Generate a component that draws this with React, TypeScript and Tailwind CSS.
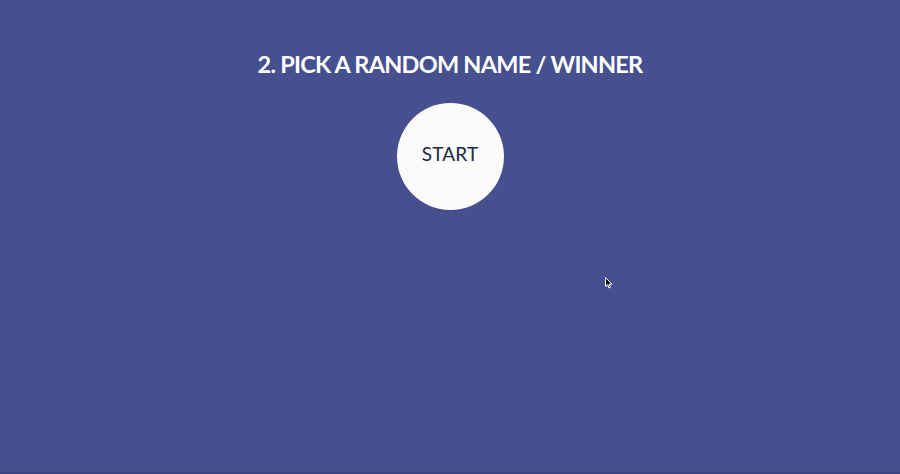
export default function App() {
  return (
    <div className="relative h-[474px] w-full overflow-hidden bg-[#46508f] font-['Lato',sans-serif]">
      <div className="flex flex-col items-center pt-[49px]">
        <h1 className="text-[23.5px] font-bold leading-[30px] tracking-[-0.75px] text-white">
          2. PICK A RANDOM NAME / WINNER
        </h1>

        <button className="mt-[24px] flex h-[107px] w-[107px] items-center justify-center rounded-full bg-[#fbfbfc] pb-[4px] text-[19px] tracking-[0.2px] text-[#1c2a45]">
          START
        </button>
      </div>

      {/* mouse pointer */}
      <svg
        className="absolute left-[605px] top-[277px]"
        width="8"
        height="12"
        viewBox="0 0 8 12"
      >
        <path d="M0.5 0.5 L0.5 9.5 L2.6 7.6 L4 11 L5.4 10.4 L4 7.2 L7 7.2 Z" fill="#111" stroke="#fff" strokeWidth="1" />
      </svg>

      <div className="absolute bottom-0 left-0 h-[2px] w-full bg-[#3b447c]" />
    </div>
  );
}
